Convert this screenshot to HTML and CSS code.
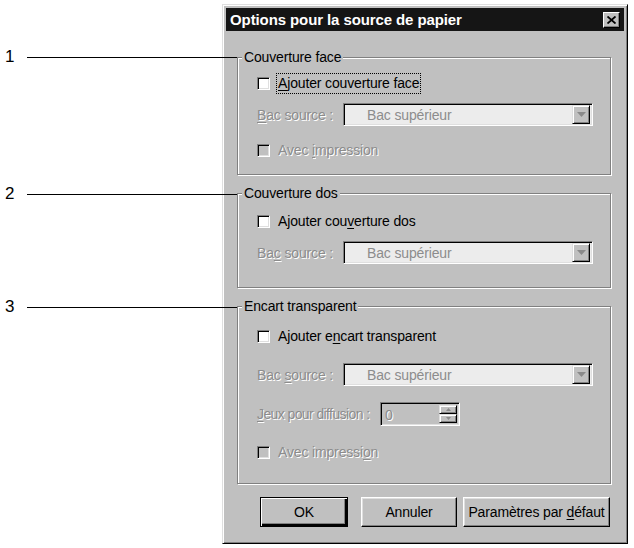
FILE: index.html
```html
<!DOCTYPE html>
<html lang="fr">
<head>
<meta charset="utf-8">
<title>Options pour la source de papier</title>
<link rel="stylesheet" href="styles.css">
</head>
<body>
<div class="page">
  <div class="callout c1"><span class="num">1</span><span class="line"></span></div>
  <div class="callout c2"><span class="num">2</span><span class="line"></span></div>
  <div class="callout c3"><span class="num">3</span><span class="line"></span></div>

  <div class="dialog">
    <div class="titlebar">
      <span class="title">Options pour la source de papier</span>
      <span class="close"><svg width="9" height="8" viewBox="0 0 9 8"><path d="M0.5 0.5 L8.5 7.5 M8.5 0.5 L0.5 7.5" stroke="#000" stroke-width="1.8" fill="none"/></svg></span>
    </div>

    <div class="group g1">
      <div class="legend">Couverture face</div>
      <div class="row r1a">
        <span class="check"></span>
        <span class="label focus"><u>A</u>jouter couverture face</span>
      </div>
      <div class="row r1b">
        <span class="label dis lab-combo"><u>B</u>ac source :</span>
        <span class="combo"><span class="combo-text">Bac supérieur</span><span class="drop"><svg width="9" height="5" viewBox="0 0 9 5"><path d="M0 0 H9 L4.5 5 Z" fill="#8a8a8a"/></svg></span></span>
      </div>
      <div class="row r1c">
        <span class="check disabled"></span>
        <span class="label dis">Avec <u>i</u>mpression</span>
      </div>
    </div>

    <div class="group g2">
      <div class="legend">Couverture dos</div>
      <div class="row r2a">
        <span class="check"></span>
        <span class="label">Ajouter cou<u>v</u>erture dos</span>
      </div>
      <div class="row r2b">
        <span class="label dis lab-combo">Ba<u>c</u> source :</span>
        <span class="combo"><span class="combo-text">Bac supérieur</span><span class="drop"><svg width="9" height="5" viewBox="0 0 9 5"><path d="M0 0 H9 L4.5 5 Z" fill="#8a8a8a"/></svg></span></span>
      </div>
    </div>

    <div class="group g3">
      <div class="legend">Encart transparent</div>
      <div class="row r3a">
        <span class="check"></span>
        <span class="label">Ajouter e<u>n</u>cart transparent</span>
      </div>
      <div class="row r3b">
        <span class="label dis lab-combo">Bac <u>s</u>ource :</span>
        <span class="combo"><span class="combo-text">Bac supérieur</span><span class="drop"><svg width="9" height="5" viewBox="0 0 9 5"><path d="M0 0 H9 L4.5 5 Z" fill="#8a8a8a"/></svg></span></span>
      </div>
      <div class="row r3c">
        <span class="label dis lab-spin"><u>J</u>eux pour diffusion :</span>
        <span class="spin">
          <span class="spin-field">0</span>
          <span class="spin-btns">
            <span class="sbtn"><svg width="5" height="3" viewBox="0 0 5 3"><path d="M2.5 0 L5 3 H0 Z" fill="#8a8a8a"/></svg></span>
            <span class="sbtn"><svg width="5" height="3" viewBox="0 0 5 3"><path d="M0 0 H5 L2.5 3 Z" fill="#8a8a8a"/></svg></span>
          </span>
        </span>
      </div>
      <div class="row r3d">
        <span class="check disabled"></span>
        <span class="label dis">Avec impressi<u>o</u>n</span>
      </div>
    </div>

    <div class="buttons">
      <span class="btn default b-ok"><span>OK</span></span>
      <span class="btn b-cancel"><span>Annuler</span></span>
      <span class="btn b-reset"><span>Paramètres par <u>d</u>éfaut</span></span>
    </div>
  </div>
</div>
</body>
</html>
```

FILE: styles.css
```css
html, body {
  margin: 0;
  padding: 0;
  background: #ffffff;
}

body {
  font-family: "Liberation Sans", Arial, sans-serif;
  font-size: 14px;
  letter-spacing: -0.15px;
  color: #000;
}

.page {
  position: relative;
  width: 634px;
  height: 548px;
  padding-top: 4px;
  padding-left: 222px;
  box-sizing: border-box;
}

/* callouts */
.callout {
  position: absolute;
  left: 0;
  width: 237px;
  height: 20px;
  display: flex;
  align-items: center;
}
.callout .num {
  width: 27px;
  padding-left: 5px;
  box-sizing: border-box;
  font-size: 17px;
  letter-spacing: 0;
  line-height: 20px;
}
.callout .line {
  flex: 1;
  height: 1px;
  background: #000;
}
.c1 { top: 47px; }
.c2 { top: 184px; }
.c3 { top: 297px; }

/* dialog */
.dialog {
  width: 406px;
  height: 540px;
  box-sizing: border-box;
  background: #c0c0c0;
  border: 1px solid;
  border-color: #dfdfdf #000 #000 #dfdfdf;
  box-shadow: inset 1px 1px 0 #fff, inset -1px -1px 0 #808080;
  padding: 3px;
  display: flex;
  flex-direction: column;
}

.titlebar {
  height: 23px;
  background: #151515;
  display: flex;
  align-items: center;
  justify-content: space-between;
  padding: 0 4px 0 4px;
}
.title {
  color: #fff;
  font-weight: bold;
  font-size: 15px;
  letter-spacing: -0.1px;
}
.close {
  width: 17px;
  height: 16px;
  box-sizing: border-box;
  background: #c0c0c0;
  border: 1px solid;
  border-color: #fff #000 #000 #fff;
  box-shadow: inset -1px -1px 0 #808080;
  display: flex;
  align-items: center;
  justify-content: center;
}

/* group boxes */
.group {
  margin-left: 11px;
  width: 374px;
  box-sizing: border-box;
  border: 1px solid #808080;
  box-shadow: inset 1px 1px 0 #fff, 1px 1px 0 #fff;
  padding-left: 19px;
  display: flex;
  flex-direction: column;
}
.g1 { margin-top: 26px; height: 118px; }
.g2 { margin-top: 18px; height: 95px; }
.g3 { margin-top: 18px; height: 178px; }

.legend {
  margin-top: -9px;
  margin-left: -15px;
  height: 16px;
  line-height: 16px;
  padding: 0 2px 0 2px;
  background: #c0c0c0;
  width: fit-content;
}

.row {
  display: flex;
  align-items: center;
  height: 20px;
  line-height: 20px;
}
.r1a { margin-top: 8px; }
.r1b { margin-top: 10px; height: 23px; }
.r1c { margin-top: 14px; }
.r2a { margin-top: 10px; }
.r2b { margin-top: 10px; height: 23px; }
.r3a { margin-top: 12px; }
.r3b { margin-top: 17px; height: 23px; }
.r3c { margin-top: 16px; height: 24px; }
.r3d { margin-top: 16px; }

.check {
  width: 13px;
  height: 13px;
  box-sizing: border-box;
  background: #fff;
  border: 1px solid;
  border-color: #808080 #fff #fff #808080;
  box-shadow: inset 1px 1px 0 #000, inset -1px -1px 0 #dfdfdf;
  margin-right: 8px;
  flex: none;
}
.check.disabled {
  background: #c0c0c0;
}

.label {
  white-space: nowrap;
}
.label u, .btn u {
  text-decoration-thickness: 1px;
  text-underline-offset: 2px;
}
.dis {
  color: #8c8c8c;
  text-shadow: 1px 1px 0 #fff;
}
.focus {
  outline: 1px dotted #000;
  outline-offset: 0;
  line-height: 19px;
  padding: 0 1px;
  margin-left: -1px;
}

.lab-combo { width: 86px; flex: none; }
.lab-spin { width: 123px; flex: none; letter-spacing: -0.6px; }

.combo {
  width: 250px;
  height: 23px;
  box-sizing: border-box;
  border: 1px solid;
  border-color: #808080 #fff #fff #808080;
  box-shadow: inset 1px 1px 0 #000, inset -1px -1px 0 #dfdfdf;
  background: #ececec;
  display: flex;
  align-items: center;
  justify-content: space-between;
  padding: 2px 2px 2px 23px;
}
.combo-text {
  color: #8c8c8c;
}
.drop {
  width: 18px;
  height: 19px;
  box-sizing: border-box;
  background: #c0c0c0;
  border: 1px solid;
  border-color: #dfdfdf #000 #000 #dfdfdf;
  box-shadow: inset 1px 1px 0 #fff, inset -1px -1px 0 #808080;
  display: flex;
  align-items: center;
  justify-content: center;
}

.spin {
  width: 80px;
  height: 24px;
  box-sizing: border-box;
  border: 1px solid;
  border-color: #808080 #fff #fff #808080;
  box-shadow: inset 1px 1px 0 #000, inset -1px -1px 0 #dfdfdf;
  background: #c0c0c0;
  display: flex;
  padding: 2px;
}
.spin-field {
  flex: 1;
  color: #8c8c8c;
  text-shadow: 1px 1px 0 #fff;
  line-height: 20px;
  padding-left: 2px;
}
.spin-btns {
  width: 18px;
  display: flex;
  flex-direction: column;
}
.sbtn {
  flex: 1;
  box-sizing: border-box;
  background: #c0c0c0;
  border: 1px solid;
  border-color: #dfdfdf #000 #000 #dfdfdf;
  box-shadow: inset 1px 1px 0 #fff, inset -1px -1px 0 #808080;
  display: flex;
  align-items: center;
  justify-content: center;
}

/* buttons */
.buttons {
  margin-top: 13px;
  display: flex;
  padding-left: 34px;
  height: 30px;
}
.btn {
  height: 30px;
  box-sizing: border-box;
  background: #c0c0c0;
  border: 1px solid;
  border-color: #fff #000 #000 #fff;
  box-shadow: inset -1px -1px 0 #808080, inset 1px 1px 0 #dfdfdf;
  display: flex;
  align-items: center;
  justify-content: center;
  white-space: nowrap;
}
.btn.default {
  border: 1px solid #000;
  box-shadow: inset 1px 1px 0 #fff, inset -2px -2px 0 #000, inset -3px -3px 0 #808080;
}
.b-ok { width: 88px; }
.b-cancel { width: 96px; margin-left: 13px; }
.b-reset { width: 147px; margin-left: 6px; }
```
